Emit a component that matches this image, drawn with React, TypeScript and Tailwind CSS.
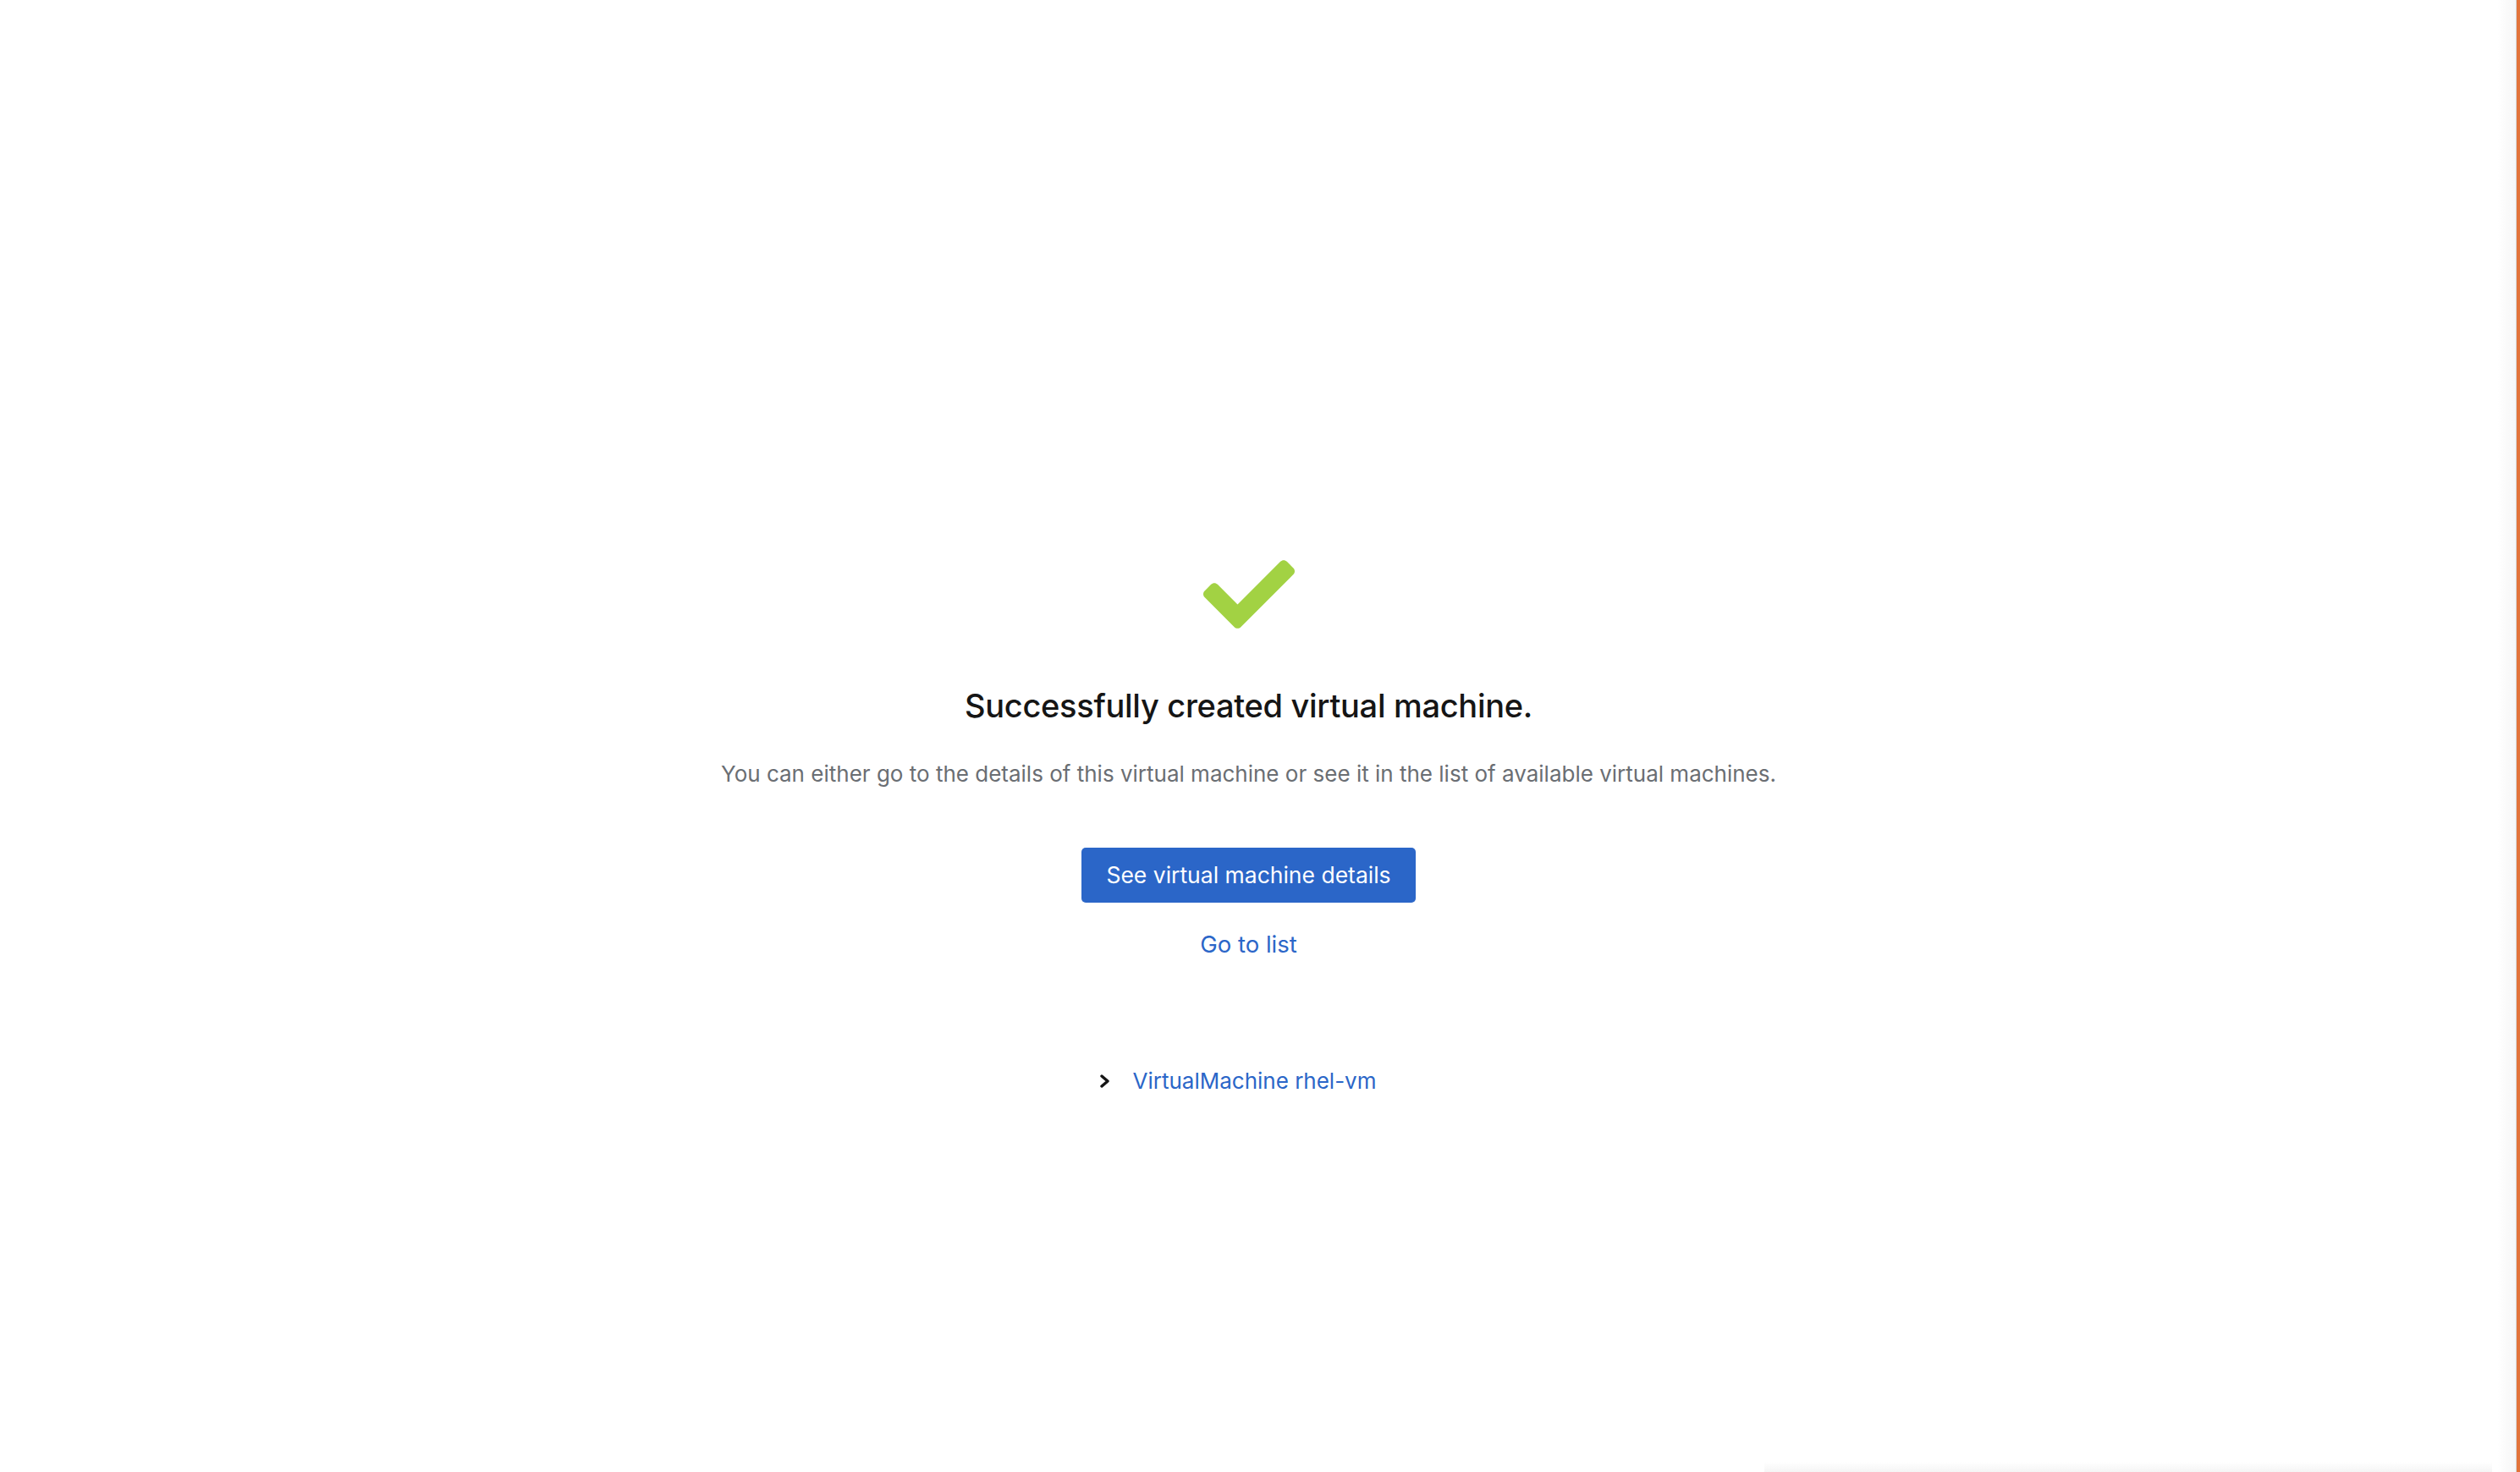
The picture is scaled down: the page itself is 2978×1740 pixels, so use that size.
import React from "react";

export default function App() {
  return (
    <div className="relative flex h-[1740px] w-[2978px] overflow-hidden bg-white" style={{ fontFamily: "Inter, 'Noto Sans', sans-serif" }}>
      <main className="flex w-[2951px] flex-col items-center pt-[662px]">
        <svg width="108" height="81" viewBox="0 64 512 384" className="block" aria-hidden="true">
          <path
            fill="#a2d243"
            d="M173.898 439.404l-166.4-166.4c-9.997-9.997-9.997-26.206 0-36.204l36.203-36.204c9.997-9.998 26.207-9.998 36.204 0L192 312.69 432.095 72.596c9.997-9.997 26.207-9.997 36.204 0l36.203 36.204c9.997 9.997 9.997 26.206 0 36.204l-294.4 294.401c-9.998 9.997-26.207 9.997-36.204-.001z"
          />
        </svg>
        <h1 className="mt-[68px] text-[38px] leading-[46px] font-medium tracking-[-0.3px] text-[#151515]">
          Successfully created virtual machine.
        </h1>
        <p className="mt-[40px] text-[26px] leading-[36px] text-[#6a6e73]">
          You can either go to the details of this virtual machine or see it in the list of available virtual machines.
        </p>
        <button className="mt-[69px] flex h-[65px] w-[395px] items-center justify-center rounded-[5px] bg-[#2b66c8] text-[26.5px] text-white">
          See virtual machine details
        </button>
        <a className="mt-[31px] text-[27.5px] leading-[36px] text-[#2b66c8]">Go to list</a>
        <div className="mt-[126px] ml-[-24px] flex items-center gap-[26px]">
          <svg width="12" height="16" viewBox="0 0 12 16" aria-hidden="true">
            <path d="M2 2 L9 8 L2 14" fill="none" stroke="#151515" strokeWidth="3.4" strokeLinecap="round" strokeLinejoin="round" />
          </svg>
          <a className="text-[26px] leading-[36px] text-[#2b66c8]">VirtualMachine rhel-vm</a>
        </div>
      </main>
      <div className="relative flex flex-1">
        <div className="w-[22px] bg-gradient-to-r from-white to-[#f6f6f6]" />
        <div className="w-px bg-[#d8d8d8]" />
        <div className="flex-1 bg-[#e2733a]" />
      </div>
      <div className="absolute bottom-0 left-[2085px] h-[12px] w-[860px] bg-gradient-to-b from-white to-[#f5f5f5]" />
    </div>
  );
}
